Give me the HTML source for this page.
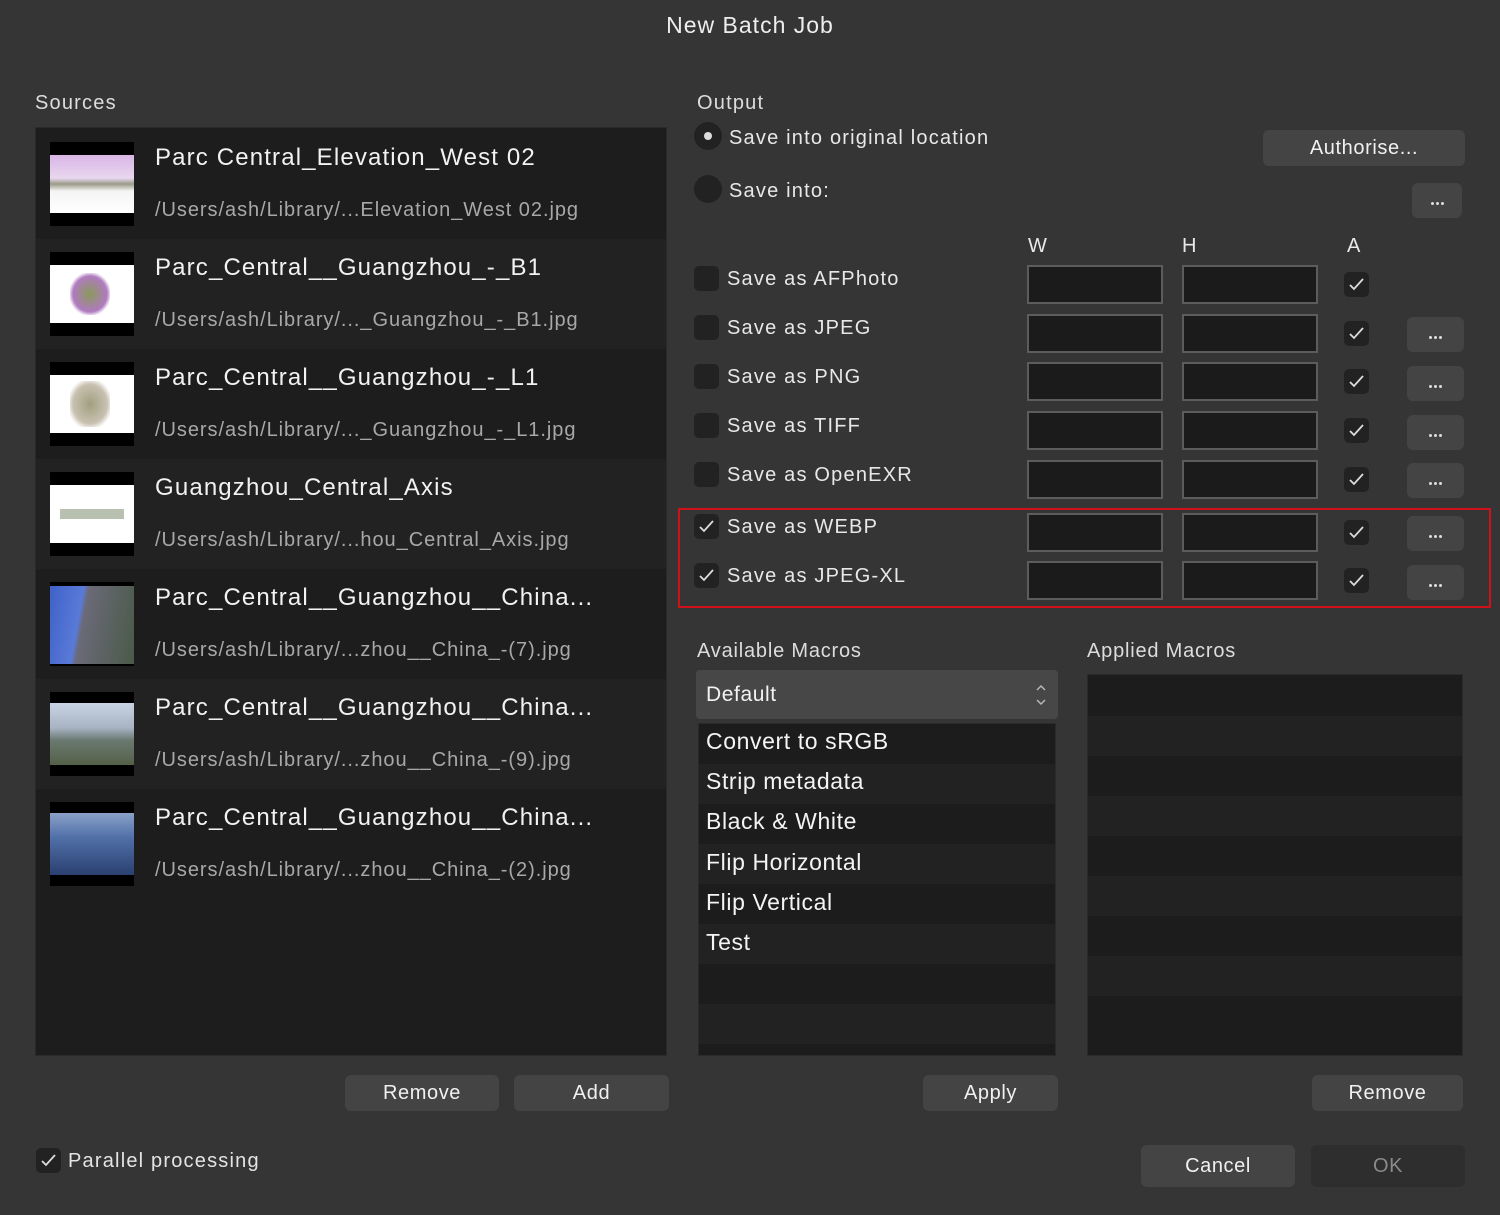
<!DOCTYPE html>
<html><head><meta charset="utf-8"><style>
*{margin:0;padding:0;box-sizing:border-box}
body{width:1500px;height:1215px;background:#353535;font-family:"Liberation Sans",sans-serif;color:#e8e8e8;position:relative;overflow:hidden}
.a{position:absolute}
.t{position:absolute;white-space:nowrap;line-height:1;letter-spacing:1.2px}
.st{letter-spacing:1.15px!important}
.sp{letter-spacing:0.95px!important}
.mc{letter-spacing:0.6px!important}
.btn{position:absolute;background:#444;border-radius:6px;color:#f0f0f0;font-size:20px;display:flex;align-items:center;justify-content:center;letter-spacing:0.6px}
.cb{position:absolute;width:25px;height:25px;background:#222;border-radius:5px}
.cb svg{position:absolute;left:5px;top:6px}
.inp{position:absolute;width:136px;height:39px;background:#1b1b1b;border:2px solid #5c5c5c}
.dots{position:absolute;width:57px;height:35px;background:#444;border-radius:6px}
.dots i{position:absolute;top:19px;width:3px;height:3px;background:#ddd;border-radius:50%}
</style></head><body>
<div class="t" style="left:0;width:1500px;text-align:center;top:14px;font-size:23px;color:#eee;letter-spacing:1px">New Batch Job</div>
<div class="t" style="left:35px;top:93px;font-size:20px;color:#ddd">Sources</div>
<div class="t" style="left:697px;top:93px;font-size:20px;color:#ddd">Output</div>

<div class="a" style="left:35px;top:127px;width:632px;height:929px;background:#1d1d1d;border:1px solid #2a2a2a"></div>
<div class="a" style="left:36px;top:239px;width:630px;height:110px;background:#222"></div>
<div class="a" style="left:36px;top:459px;width:630px;height:110px;background:#222"></div>
<div class="a" style="left:36px;top:679px;width:630px;height:110px;background:#222"></div>

<div class="a" style="left:50px;top:142px;width:84px;height:84px;background:#000"><div class="a" style="left:0;top:13px;width:84px;height:58px;background:linear-gradient(#d9b5e6 0,#e8d7ee 40%,#9a9a88 50%,#f4f4f4 62%,#fff)"></div></div>
<div class="a" style="left:50px;top:252px;width:84px;height:84px;background:#000"><div class="a" style="left:0;top:13px;width:84px;height:58px;background:#fff"><div class="a" style="left:20px;top:8px;width:40px;height:42px;background:radial-gradient(#8a9a5a,#b07ac0 60%,#fff 75%)"></div></div></div>
<div class="a" style="left:50px;top:362px;width:84px;height:84px;background:#000"><div class="a" style="left:0;top:13px;width:84px;height:58px;background:#fff"><div class="a" style="left:20px;top:6px;width:40px;height:46px;background:radial-gradient(#a0a080,#c8c0b0 60%,#fff 80%)"></div></div></div>
<div class="a" style="left:50px;top:472px;width:84px;height:84px;background:#000"><div class="a" style="left:0;top:13px;width:84px;height:58px;background:#fff"><div class="a" style="left:10px;top:24px;width:64px;height:10px;background:#b8c0b0"></div></div></div>
<div class="a" style="left:50px;top:582px;width:84px;height:84px;background:#000"><div class="a" style="left:0;top:4px;width:84px;height:78px;background:linear-gradient(100deg,#3f62c8 0,#5a7ad8 35%,#6a6a78 40%,#4a5a48 100%)"></div></div>
<div class="a" style="left:50px;top:692px;width:84px;height:84px;background:#000"><div class="a" style="left:0;top:11px;width:84px;height:62px;background:linear-gradient(#c8d4e4 0,#a8b4c4 40%,#6a7a70 60%,#556048 100%)"></div></div>
<div class="a" style="left:50px;top:802px;width:84px;height:84px;background:#000"><div class="a" style="left:0;top:11px;width:84px;height:62px;background:linear-gradient(#8aa0c8 0,#5070a8 40%,#2a4070 100%)"></div></div>

<div class="t st" style="left:155px;top:146px;font-size:24px;color:#f2f2f2">Parc Central_Elevation_West 02</div>
<div class="t sp" style="left:155px;top:200px;font-size:20px;color:#a8a8a8">/Users/ash/Library/...Elevation_West 02.jpg</div>
<div class="t st" style="left:155px;top:256px;font-size:24px;color:#f2f2f2">Parc_Central__Guangzhou_-_B1</div>
<div class="t sp" style="left:155px;top:310px;font-size:20px;color:#a8a8a8">/Users/ash/Library/..._Guangzhou_-_B1.jpg</div>
<div class="t st" style="left:155px;top:366px;font-size:24px;color:#f2f2f2">Parc_Central__Guangzhou_-_L1</div>
<div class="t sp" style="left:155px;top:420px;font-size:20px;color:#a8a8a8">/Users/ash/Library/..._Guangzhou_-_L1.jpg</div>
<div class="t st" style="left:155px;top:476px;font-size:24px;color:#f2f2f2">Guangzhou_Central_Axis</div>
<div class="t sp" style="left:155px;top:530px;font-size:20px;color:#a8a8a8">/Users/ash/Library/...hou_Central_Axis.jpg</div>
<div class="t st" style="left:155px;top:586px;font-size:24px;color:#f2f2f2">Parc_Central__Guangzhou__China...</div>
<div class="t sp" style="left:155px;top:640px;font-size:20px;color:#a8a8a8">/Users/ash/Library/...zhou__China_-(7).jpg</div>
<div class="t st" style="left:155px;top:696px;font-size:24px;color:#f2f2f2">Parc_Central__Guangzhou__China...</div>
<div class="t sp" style="left:155px;top:750px;font-size:20px;color:#a8a8a8">/Users/ash/Library/...zhou__China_-(9).jpg</div>
<div class="t st" style="left:155px;top:806px;font-size:24px;color:#f2f2f2">Parc_Central__Guangzhou__China...</div>
<div class="t sp" style="left:155px;top:860px;font-size:20px;color:#a8a8a8">/Users/ash/Library/...zhou__China_-(2).jpg</div>

<div class="a" style="left:694px;top:122px;width:28px;height:28px;border-radius:50%;background:#222"><div class="a" style="left:10px;top:10px;width:8px;height:8px;border-radius:50%;background:#ddd"></div></div>
<div class="t" style="left:729px;top:128px;font-size:20px">Save into original location</div>
<div class="btn" style="left:1263px;top:130px;width:202px;height:36px">Authorise...</div>
<div class="a" style="left:694px;top:175px;width:28px;height:28px;border-radius:50%;background:#222"></div>
<div class="t" style="left:729px;top:181px;font-size:20px">Save into:</div>
<div class="dots" style="left:1412px;top:183px;height:35px;width:50px"><i style="left:19px"></i><i style="left:24px"></i><i style="left:29px"></i></div>

<div class="t" style="left:1028px;top:236px;font-size:20px">W</div>
<div class="t" style="left:1182px;top:236px;font-size:20px">H</div>
<div class="t" style="left:1347px;top:236px;font-size:20px">A</div>

<div class="cb" style="left:694px;top:266px"></div><div class="t" style="left:727px;top:269px;font-size:20px">Save as AFPhoto</div>
<div class="cb" style="left:694px;top:315px"></div><div class="t" style="left:727px;top:318px;font-size:20px">Save as JPEG</div>
<div class="cb" style="left:694px;top:364px"></div><div class="t" style="left:727px;top:367px;font-size:20px">Save as PNG</div>
<div class="cb" style="left:694px;top:413px"></div><div class="t" style="left:727px;top:416px;font-size:20px">Save as TIFF</div>
<div class="cb" style="left:694px;top:462px"></div><div class="t" style="left:727px;top:465px;font-size:20px">Save as OpenEXR</div>
<div class="cb" style="left:694px;top:514px"><svg width="15" height="13" viewBox="0 0 15 13"><path d="M1 7l4 4 9-10" fill="none" stroke="#ddd" stroke-width="1.8"/></svg></div><div class="t" style="left:727px;top:517px;font-size:20px">Save as WEBP</div>
<div class="cb" style="left:694px;top:563px"><svg width="15" height="13" viewBox="0 0 15 13"><path d="M1 7l4 4 9-10" fill="none" stroke="#ddd" stroke-width="1.8"/></svg></div><div class="t" style="left:727px;top:566px;font-size:20px">Save as JPEG-XL</div>

<div class="inp" style="left:1027px;top:265px"></div><div class="inp" style="left:1182px;top:265px"></div>
<div class="inp" style="left:1027px;top:314px"></div><div class="inp" style="left:1182px;top:314px"></div>
<div class="inp" style="left:1027px;top:362px"></div><div class="inp" style="left:1182px;top:362px"></div>
<div class="inp" style="left:1027px;top:411px"></div><div class="inp" style="left:1182px;top:411px"></div>
<div class="inp" style="left:1027px;top:460px"></div><div class="inp" style="left:1182px;top:460px"></div>
<div class="inp" style="left:1027px;top:513px"></div><div class="inp" style="left:1182px;top:513px"></div>
<div class="inp" style="left:1027px;top:561px"></div><div class="inp" style="left:1182px;top:561px"></div>

<div class="cb" style="left:1344px;top:272px"><svg width="15" height="13" viewBox="0 0 15 13"><path d="M1 7l4 4 9-10" fill="none" stroke="#ddd" stroke-width="1.8"/></svg></div>
<div class="cb" style="left:1344px;top:321px"><svg width="15" height="13" viewBox="0 0 15 13"><path d="M1 7l4 4 9-10" fill="none" stroke="#ddd" stroke-width="1.8"/></svg></div>
<div class="cb" style="left:1344px;top:369px"><svg width="15" height="13" viewBox="0 0 15 13"><path d="M1 7l4 4 9-10" fill="none" stroke="#ddd" stroke-width="1.8"/></svg></div>
<div class="cb" style="left:1344px;top:418px"><svg width="15" height="13" viewBox="0 0 15 13"><path d="M1 7l4 4 9-10" fill="none" stroke="#ddd" stroke-width="1.8"/></svg></div>
<div class="cb" style="left:1344px;top:467px"><svg width="15" height="13" viewBox="0 0 15 13"><path d="M1 7l4 4 9-10" fill="none" stroke="#ddd" stroke-width="1.8"/></svg></div>
<div class="cb" style="left:1344px;top:520px"><svg width="15" height="13" viewBox="0 0 15 13"><path d="M1 7l4 4 9-10" fill="none" stroke="#ddd" stroke-width="1.8"/></svg></div>
<div class="cb" style="left:1344px;top:568px"><svg width="15" height="13" viewBox="0 0 15 13"><path d="M1 7l4 4 9-10" fill="none" stroke="#ddd" stroke-width="1.8"/></svg></div>

<div class="dots" style="left:1407px;top:317px"><i style="left:22px"></i><i style="left:27px"></i><i style="left:32px"></i></div>
<div class="dots" style="left:1407px;top:366px"><i style="left:22px"></i><i style="left:27px"></i><i style="left:32px"></i></div>
<div class="dots" style="left:1407px;top:415px"><i style="left:22px"></i><i style="left:27px"></i><i style="left:32px"></i></div>
<div class="dots" style="left:1407px;top:463px"><i style="left:22px"></i><i style="left:27px"></i><i style="left:32px"></i></div>
<div class="dots" style="left:1407px;top:516px"><i style="left:22px"></i><i style="left:27px"></i><i style="left:32px"></i></div>
<div class="dots" style="left:1407px;top:565px"><i style="left:22px"></i><i style="left:27px"></i><i style="left:32px"></i></div>

<div class="a" style="left:678px;top:508px;width:813px;height:100px;border:2px solid #d0101a"></div>

<div class="t" style="left:697px;top:641px;font-size:20px;color:#ddd;letter-spacing:0.8px">Available Macros</div>
<div class="t" style="left:1087px;top:641px;font-size:20px;color:#ddd;letter-spacing:0.8px">Applied Macros</div>
<div class="a" style="left:696px;top:670px;width:362px;height:49px;background:#474747;border-radius:4px"></div>
<div class="t mc" style="left:706px;top:684px;font-size:21px;color:#f2f2f2">Default</div>
<svg class="a" style="left:1034px;top:682px" width="14" height="26" viewBox="0 0 14 26"><path d="M3 8l4-4 4 4M3 18l4 4 4-4" fill="none" stroke="#bbb" stroke-width="1.4"/></svg>

<div class="a" style="left:698px;top:723px;width:358px;height:333px;background:#1c1c1c;border:1px solid #2a2a2a"></div>
<div class="a" style="left:699px;top:764px;width:356px;height:40px;background:#222"></div>
<div class="a" style="left:699px;top:844px;width:356px;height:40px;background:#222"></div>
<div class="a" style="left:699px;top:924px;width:356px;height:40px;background:#222"></div>
<div class="a" style="left:699px;top:1004px;width:356px;height:40px;background:#222"></div>
<div class="t mc" style="left:706px;top:730px;font-size:23px;color:#f4f4f4">Convert to sRGB</div>
<div class="t mc" style="left:706px;top:770px;font-size:23px;color:#f4f4f4">Strip metadata</div>
<div class="t mc" style="left:706px;top:810px;font-size:23px;color:#f4f4f4">Black &amp; White</div>
<div class="t mc" style="left:706px;top:851px;font-size:23px;color:#f4f4f4">Flip Horizontal</div>
<div class="t mc" style="left:706px;top:891px;font-size:23px;color:#f4f4f4">Flip Vertical</div>
<div class="t mc" style="left:706px;top:931px;font-size:23px;color:#f4f4f4">Test</div>

<div class="a" style="left:1087px;top:674px;width:376px;height:382px;background:#1c1c1c;border:1px solid #2a2a2a"></div>
<div class="a" style="left:1088px;top:716px;width:374px;height:40px;background:#222"></div>
<div class="a" style="left:1088px;top:796px;width:374px;height:40px;background:#222"></div>
<div class="a" style="left:1088px;top:876px;width:374px;height:40px;background:#222"></div>
<div class="a" style="left:1088px;top:956px;width:374px;height:40px;background:#222"></div>

<div class="btn" style="left:345px;top:1075px;width:154px;height:36px">Remove</div>
<div class="btn" style="left:514px;top:1075px;width:155px;height:36px">Add</div>
<div class="btn" style="left:923px;top:1075px;width:135px;height:36px">Apply</div>
<div class="btn" style="left:1312px;top:1075px;width:151px;height:36px">Remove</div>
<div class="btn" style="left:1141px;top:1145px;width:154px;height:42px">Cancel</div>
<div class="btn" style="left:1311px;top:1145px;width:154px;height:42px;background:#2e2e2e;color:#8a8a8a">OK</div>

<div class="cb" style="left:36px;top:1148px"><svg width="15" height="13" viewBox="0 0 15 13"><path d="M1 7l4 4 9-10" fill="none" stroke="#ddd" stroke-width="1.8"/></svg></div>
<div class="t" style="left:68px;top:1151px;font-size:20px;color:#e4e4e4">Parallel processing</div>
</body></html>
